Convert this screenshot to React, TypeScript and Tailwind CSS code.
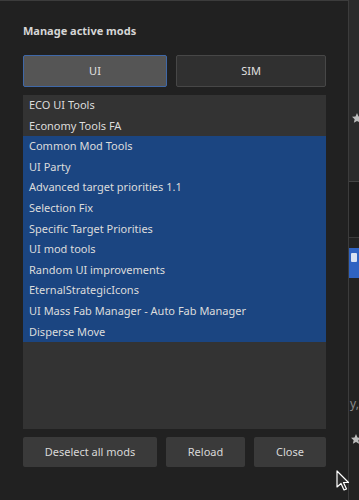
const mods = [
  { name: "ECO UI Tools", active: false },
  { name: "Economy Tools FA", active: false },
  { name: "Common Mod Tools", active: true },
  { name: "UI Party", active: true },
  { name: "Advanced target priorities 1.1", active: true },
  { name: "Selection Fix", active: true },
  { name: "Specific Target Priorities", active: true },
  { name: "UI mod tools", active: true },
  { name: "Random UI improvements", active: true },
  { name: "EternalStrategicIcons", active: true },
  { name: "UI Mass Fab Manager - Auto Fab Manager", active: true },
  { name: "Disperse Move", active: true },
];

const Star = () => (
  <svg width="12" height="12" viewBox="0 0 24 24" className="fill-[#bdbdbd]">
    <path d="M12 2l3 7 7 .6-5.3 4.7 1.6 7.2L12 17.8 5.7 21.5l1.6-7.2L2 9.6 9 9z" />
  </svg>
);

export default function App() {
  return (
    <div className="relative flex w-[359px] h-[500px] overflow-hidden bg-[#222] font-['Noto_Sans','Open_Sans',sans-serif]">
      {/* dialog */}
      <div className="w-[349px] h-full shrink-0 bg-[#212121] border-r border-t border-[#3c3c3c] pl-[23px] pr-[22px] flex flex-col">
        <h2 className="mt-[22px] text-[11px] font-bold text-[#d6d6d6] leading-[16px]">Manage active mods</h2>
        <div className="mt-[16px] flex gap-[9px] h-[32px]">
          <button className="w-[144px] rounded-[2px] bg-[#555555] border border-[#3f68a8] text-[11px] text-[#e0e0e0]">UI</button>
          <button className="flex-1 rounded-[2px] bg-[#303030] border border-[#474747] text-[11px] text-[#e0e0e0]">SIM</button>
        </div>
        <div className="mt-[8px] h-[334px] bg-[#333333]">
          {mods.map((m) => (
            <div
              key={m.name}
              className={`h-[20.6px] flex items-center pl-[6px] text-[11px] text-[#dcdcdc] ${m.active ? "bg-[#1b4581]" : ""}`}
            >
              {m.name}
            </div>
          ))}
        </div>
        <div className="mt-[8px] flex gap-[9px] h-[30px]">
          <button className="w-[134px] rounded-[2px] bg-[#3a3a3a] text-[11px] text-[#d8d8d8]">Deselect all mods</button>
          <button className="w-[79px] rounded-[2px] bg-[#3a3a3a] text-[11px] text-[#d8d8d8]">Reload</button>
          <button className="flex-1 rounded-[2px] bg-[#3a3a3a] text-[11px] text-[#d8d8d8]">Close</button>
        </div>
      </div>
      {/* background app strip */}
      <div className="flex-1 flex flex-col">
        <div className="h-[182px] bg-[#2b2b2b] border-b border-[#444] pt-[112px] pl-[2px]">
          <Star />
        </div>
        <div className="h-[56px] bg-[#1c1c1c] border-b border-[#3a3a3a]"></div>
        <div className="mt-[10px] h-[30px] bg-[#2f63c2] pt-[5px] pl-[2px]">
          <div className="w-[6px] h-[9px] rounded-[1px] bg-[#d8e2f2]"></div>
        </div>
        <div className="flex-1 bg-[#222] pt-[119px] pl-[1px] text-[12px] text-[#8a8a8a] leading-[14px]">
          y,
          <div className="mt-[22px]">
            <Star />
          </div>
        </div>
      </div>
      {/* mouse cursor */}
      <svg className="absolute left-[336px] top-[470px]" width="14" height="22" viewBox="0 0 14 22">
        <path d="M1 1 L1 17 L5 13.5 L8 20 L10.5 19 L7.5 12.5 L12.5 12.5 Z" fill="#2a2a2a" stroke="#ffffff" strokeWidth="1.2" strokeLinejoin="round" />
      </svg>
    </div>
  );
}
